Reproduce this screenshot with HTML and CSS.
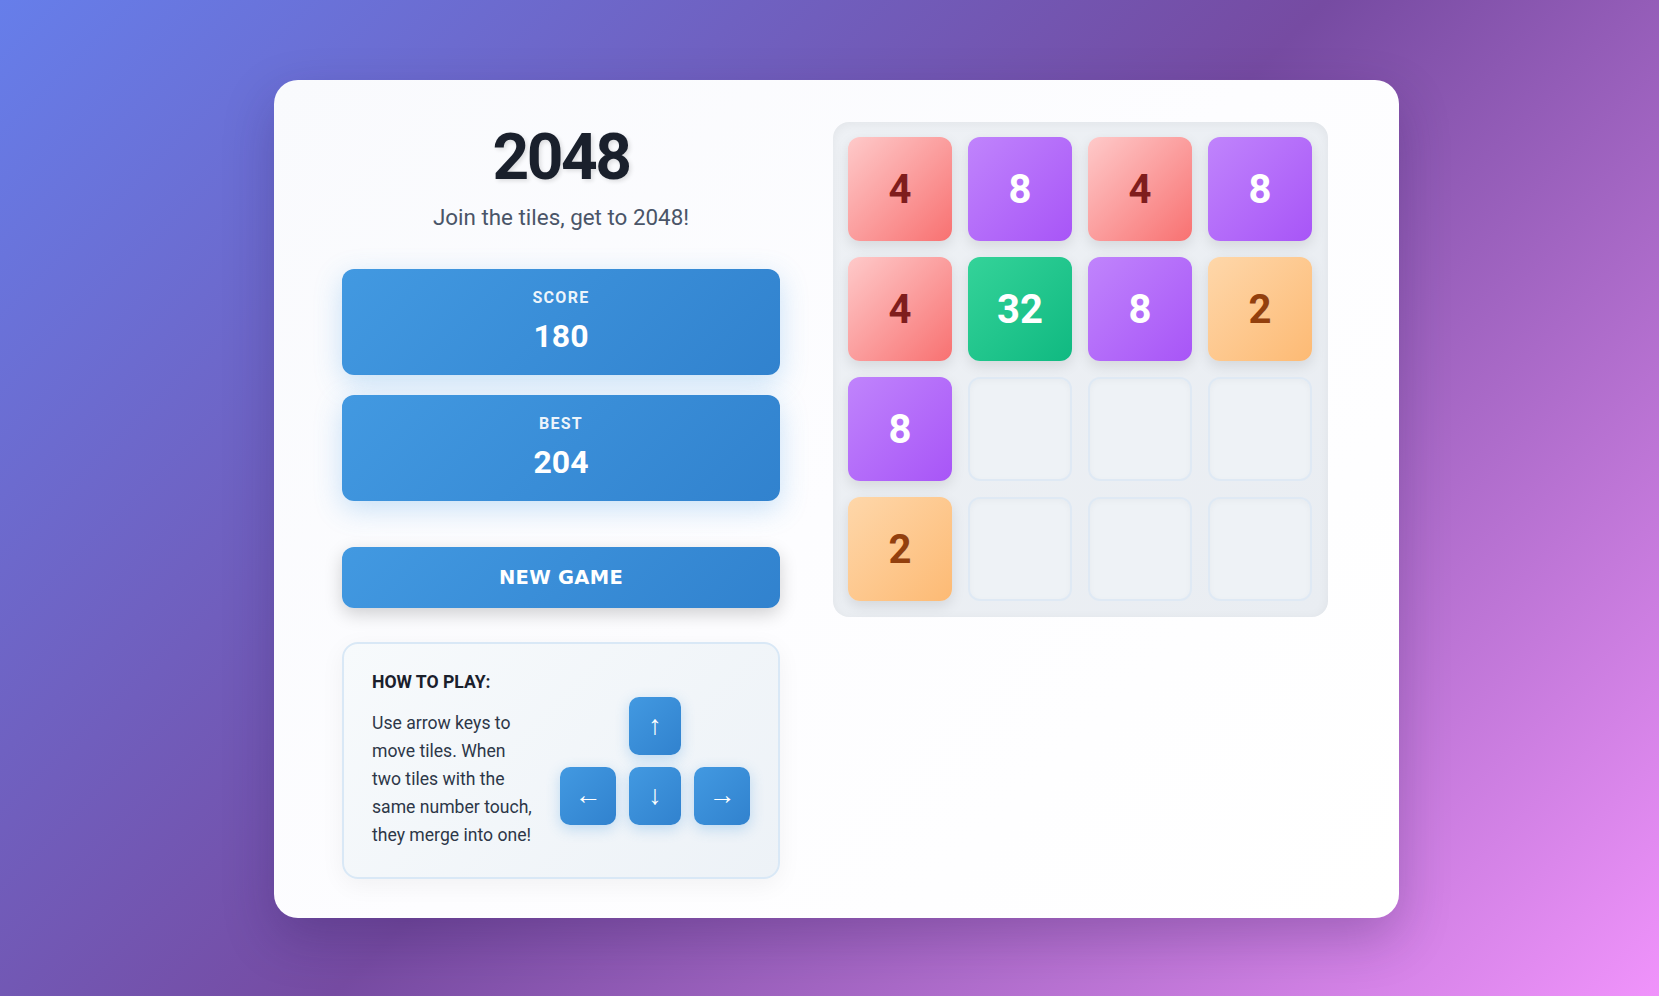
FILE: index.html
```html
<!DOCTYPE html>
<html lang="en">
<head>
<meta charset="utf-8">
<title>2048</title>
<link rel="stylesheet" href="styles.css">
</head>
<body>
<main class="card">
  <section class="left">
    <h1 class="title">2048</h1>
    <p class="subtitle">Join the tiles, get to 2048!</p>
    <div class="scores">
      <div class="score-box">
        <div class="score-label">SCORE</div>
        <div class="score-value">180</div>
      </div>
      <div class="score-box">
        <div class="score-label">BEST</div>
        <div class="score-value">204</div>
      </div>
    </div>
    <button class="new-game">NEW GAME</button>
    <div class="howto">
      <div class="howto-text">
        <h3 class="howto-title">HOW TO PLAY:</h3>
        <p class="howto-body">Use arrow keys to move tiles. When two tiles with the same number touch, they merge into one!</p>
      </div>
      <div class="keys">
        <div class="key key-up">↑</div>
        <div class="key key-left">←</div>
        <div class="key key-down">↓</div>
        <div class="key key-right">→</div>
      </div>
    </div>
  </section>
  <section class="board">
    <div class="tile t4">4</div>
    <div class="tile t8">8</div>
    <div class="tile t4">4</div>
    <div class="tile t8">8</div>
    <div class="tile t4">4</div>
    <div class="tile t32">32</div>
    <div class="tile t8">8</div>
    <div class="tile t2">2</div>
    <div class="tile t8">8</div>
    <div class="tile empty"></div>
    <div class="tile empty"></div>
    <div class="tile empty"></div>
    <div class="tile t2">2</div>
    <div class="tile empty"></div>
    <div class="tile empty"></div>
    <div class="tile empty"></div>
  </section>
</main>
</body>
</html>
```

FILE: styles.css
```css
* { box-sizing: border-box; }

html, body {
  margin: 0;
  height: 100%;
}

body {
  width: 1659px;
  height: 996px;
  overflow: hidden;
  font-family: Roboto, "Liberation Sans", sans-serif;
  background: linear-gradient(135deg, #667eea 0%, #764ba2 50%, #f093fb 100%);
  padding: 80px 0 0 274px;
}

.card {
  width: 1125px;
  height: 838px;
  border-radius: 24px;
  background: linear-gradient(135deg, #f9fafd 0%, #fdfdff 50%, #ffffff 100%);
  box-shadow: 0 20px 50px rgba(40, 20, 80, 0.25);
  padding: 40px 0 0 68px;
  display: flex;
  align-items: flex-start;
  gap: 53px;
}

.left {
  width: 438px;
  display: flex;
  flex-direction: column;
}

.title {
  margin: 0;
  font-size: 64px;
  line-height: 75px;
  font-weight: 700;
  text-align: center;
  color: #1a202c;
  letter-spacing: -2.5px;
  text-shadow: 2px 2px 4px rgba(0, 0, 0, 0.12);
}

.subtitle {
  margin: 9px 0 0;
  font-size: 22.4px;
  line-height: 26px;
  text-align: center;
  color: #4a5568;
}

.scores {
  margin-top: 39px;
  display: flex;
  flex-direction: column;
  gap: 20px;
}

.score-box {
  height: 106px;
  border-radius: 12px;
  background: linear-gradient(135deg, #4299e1 0%, #3182ce 100%);
  box-shadow: 0 8px 28px rgba(66, 153, 225, 0.28);
  color: #fff;
  text-align: center;
  padding-top: 20px;
}

.score-label {
  font-size: 16px;
  line-height: 18px;
  font-weight: 700;
  letter-spacing: 1.3px;
  color: rgba(255, 255, 255, 0.92);
}

.score-value {
  margin-top: 10px;
  font-size: 32px;
  line-height: 38px;
  font-weight: 700;
}

.new-game {
  margin-top: 46px;
  height: 61px;
  border: none;
  border-radius: 12px;
  background: linear-gradient(135deg, #4299e1 0%, #3182ce 100%);
  box-shadow: 0 6px 18px rgba(0, 0, 0, 0.18);
  color: #fff;
  font-family: "DejaVu Sans", sans-serif;
  font-weight: 700;
  font-size: 19.5px;
  letter-spacing: 0.3px;
}

.howto {
  margin-top: 34px;
  height: 237px;
  border: 2px solid #d9e8f6;
  border-radius: 16px;
  background: linear-gradient(135deg, #f7fafc 0%, #edf2f7 100%);
  box-shadow: 0 6px 24px rgba(0, 0, 0, 0.05);
  padding: 0 28px;
  display: flex;
  align-items: center;
  gap: 24px;
}

.howto-text {
  flex: 1;
  min-width: 0;
}

.howto-title {
  margin: 0 0 16px;
  font-size: 17.6px;
  line-height: 21px;
  font-weight: 700;
  color: #1a202c;
}

.howto-body {
  margin: 0;
  font-size: 17.6px;
  line-height: 1.6;
  color: #2d3748;
}

.keys {
  display: grid;
  grid-template-columns: 56px 52px 56px;
  grid-template-rows: 58px 58px;
  gap: 12px 13px;
}

.key {
  border-radius: 10px;
  background: linear-gradient(135deg, #4299e1 0%, #3182ce 100%);
  box-shadow: 0 4px 14px rgba(66, 153, 225, 0.3);
  color: #fff;
  font-family: "Liberation Sans", sans-serif;
  font-size: 27px;
  line-height: 1;
  display: flex;
  align-items: center;
  justify-content: center;
}

.key-up { grid-column: 2; grid-row: 1; }
.key-left { grid-column: 1; grid-row: 2; }
.key-down { grid-column: 2; grid-row: 2; }
.key-right { grid-column: 3; grid-row: 2; }

.board {
  margin-top: 2px;
  width: 495px;
  height: 495px;
  padding: 15px;
  border-radius: 16px;
  background: linear-gradient(135deg, #eef1f5 0%, #e9edf2 100%);
  box-shadow: inset 0 2px 12px rgba(0, 0, 0, 0.05);
  display: grid;
  grid-template-columns: repeat(4, 104px);
  grid-template-rows: repeat(4, 104px);
  gap: 16px;
}

.tile {
  border-radius: 12px;
  display: flex;
  align-items: center;
  justify-content: center;
  font-size: 40px;
  font-weight: 700;
  box-shadow: 0 5px 14px rgba(0, 0, 0, 0.1);
}

.t2 {
  background: linear-gradient(135deg, #fed7aa 0%, #fdba74 100%);
  color: #92400e;
}

.t4 {
  background: linear-gradient(135deg, #fecaca 0%, #f87171 100%);
  color: #7f1d1d;
}

.t8 {
  background: linear-gradient(135deg, #c084fc 0%, #a855f7 100%);
  color: #fff;
}

.t32 {
  background: linear-gradient(135deg, #34d399 0%, #10b981 100%);
  color: #fff;
}

.empty {
  background: #eef2f6;
  border: 2px solid #dfe9f4;
  box-shadow: inset 0 2px 6px rgba(0, 0, 0, 0.03);
}
```
